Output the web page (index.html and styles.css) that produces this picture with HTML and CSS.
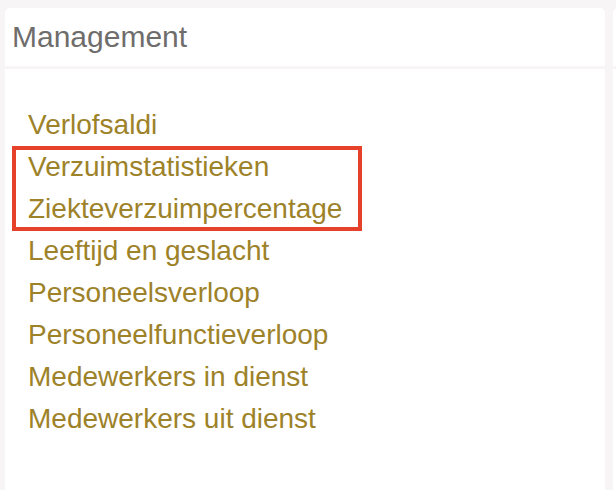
FILE: index.html
```html
<!DOCTYPE html>
<html lang="nl">
<head>
<meta charset="utf-8">
<title>Management</title>
<link rel="stylesheet" href="styles.css">
</head>
<body>
<div class="page">
  <section class="panel">
    <header class="panel-head">Management</header>
    <div class="panel-body">
      <ul class="links">
        <li><a href="#">Verlofsaldi</a></li>
        <li class="marked">
          <ul class="links">
            <li><a href="#">Verzuimstatistieken</a></li>
            <li><a href="#">Ziekteverzuimpercentage</a></li>
          </ul>
        </li>
        <li><a href="#">Leeftijd en geslacht</a></li>
        <li><a href="#">Personeelsverloop</a></li>
        <li><a href="#">Personeelfunctieverloop</a></li>
        <li><a href="#">Medewerkers in dienst</a></li>
        <li><a href="#">Medewerkers uit dienst</a></li>
      </ul>
    </div>
  </section>
  <section class="panel panel-next">
    <header class="panel-head"></header>
    <div class="panel-body"></div>
  </section>
</div>
</body>
</html>
```

FILE: styles.css
```css
html, body {
  margin: 0;
  padding: 0;
  background: #f7f5f5;
  height: 100%;
  overflow: hidden;
}

body {
  font-family: "Liberation Sans", Arial, Helvetica, sans-serif;
}

.page {
  display: flex;
  gap: 8px;
  padding: 8px 0 0 5px;
  height: 100%;
  box-sizing: border-box;
  overflow: hidden;
}

.panel {
  width: 600px;
  flex: 0 0 auto;
  display: flex;
  flex-direction: column;
  gap: 3px;
}

.panel-next {
  width: 100px;
}

.panel-head {
  background: #ffffff;
  border-radius: 5px 5px 0 0;
  height: 58px;
  box-sizing: border-box;
  padding: 12px 8px 12px 7px;
  font-size: 30px;
  line-height: 34px;
  color: #6f6d6c;
}

.panel-body {
  background: #ffffff;
  flex: 1;
  padding: 35px 23px 0 23px;
}

.links {
  list-style: none;
  margin: 0;
  padding: 0;
}

.links li {
  font-size: 28px;
  line-height: 42px;
}

.links a {
  color: #9d8229;
  text-decoration: none;
}

.marked {
  position: relative;
}

.marked::after {
  content: "";
  position: absolute;
  top: 0;
  left: -16px;
  width: 342px;
  height: 77px;
  border: 4px solid #e5412b;
  pointer-events: none;
}
```
